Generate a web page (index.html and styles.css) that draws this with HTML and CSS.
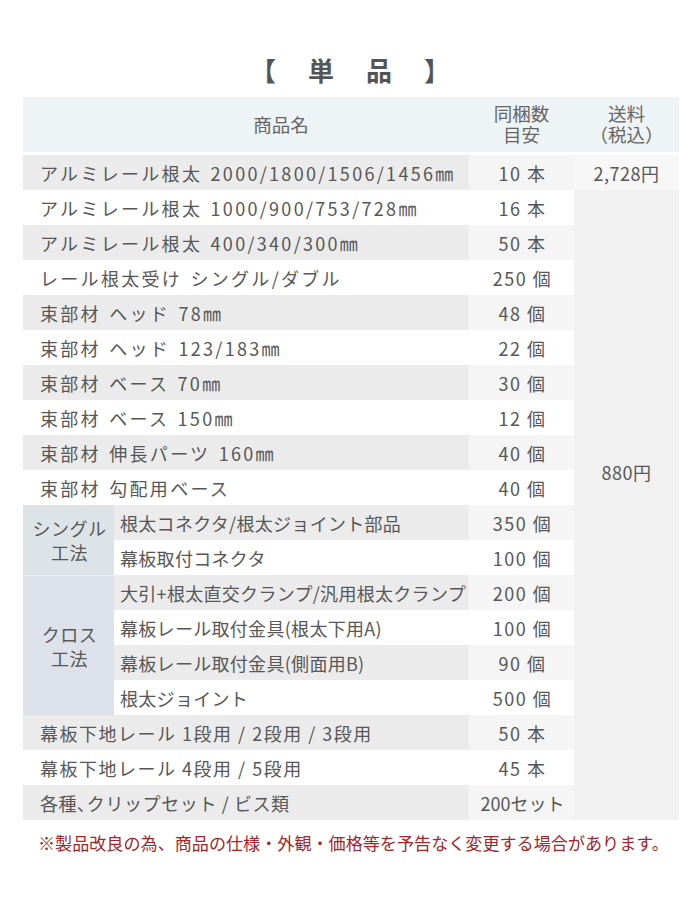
FILE: index.html
```html
<!DOCTYPE html>
<html lang="ja">
<head>
<meta charset="utf-8">
<title>単品</title>
<link rel="stylesheet" href="styles.css">
</head>
<body>
<h1 class="title">【単品】</h1>
<table class="price">
  <colgroup>
    <col class="c-label"><col class="c-sub"><col class="c-qty"><col class="c-ship">
  </colgroup>
  <thead>
    <tr>
      <th colspan="2" class="h-name">商品名</th>
      <th class="h-qty"><span class="hl">同梱数</span><span class="hl">目安</span></th>
      <th class="h-ship"><span class="hl">送料</span><span class="hl">（税込）</span></th>
    </tr>
  </thead>
  <tbody>
    <tr class="odd">
      <td colspan="2" class="name">アルミレール根太 2000/1800/1506/1456㎜</td>
      <td class="qty">10 本</td>
      <td class="ship first">2,728円</td>
    </tr>
    <tr>
      <td colspan="2" class="name">アルミレール根太 1000/900/753/728㎜</td>
      <td class="qty">16 本</td>
      <td class="ship rest" rowspan="18">880円</td>
    </tr>
    <tr class="odd"><td colspan="2" class="name">アルミレール根太 400/340/300㎜</td><td class="qty">50 本</td></tr>
    <tr><td colspan="2" class="name">レール根太受け シングル/ダブル</td><td class="qty">250 個</td></tr>
    <tr class="odd"><td colspan="2" class="name">束部材 ヘッド 78㎜</td><td class="qty">48 個</td></tr>
    <tr><td colspan="2" class="name">束部材 ヘッド 123/183㎜</td><td class="qty">22 個</td></tr>
    <tr class="odd"><td colspan="2" class="name">束部材 ベース 70㎜</td><td class="qty">30 個</td></tr>
    <tr><td colspan="2" class="name">束部材 ベース 150㎜</td><td class="qty">12 個</td></tr>
    <tr class="odd"><td colspan="2" class="name">束部材 伸長パーツ 160㎜</td><td class="qty">40 個</td></tr>
    <tr><td colspan="2" class="name">束部材 勾配用ベース</td><td class="qty">40 個</td></tr>
    <tr class="odd">
      <td rowspan="2" class="label single">シングル<br>工法</td>
      <td class="sub">根太コネクタ/根太ジョイント部品</td><td class="qty">350 個</td>
    </tr>
    <tr><td class="sub">幕板取付コネクタ</td><td class="qty">100 個</td></tr>
    <tr class="odd">
      <td rowspan="4" class="label cross">クロス<br>工法</td>
      <td class="sub">大引+根太直交クランプ/汎用根太クランプ</td><td class="qty">200 個</td>
    </tr>
    <tr><td class="sub">幕板レール取付金具(根太下用A)</td><td class="qty">100 個</td></tr>
    <tr class="odd"><td class="sub">幕板レール取付金具(側面用B)</td><td class="qty">90 個</td></tr>
    <tr><td class="sub">根太ジョイント</td><td class="qty">500 個</td></tr>
    <tr class="odd"><td colspan="2" class="name tight">幕板下地レール 1段用 / 2段用 / 3段用</td><td class="qty">50 本</td></tr>
    <tr><td colspan="2" class="name tight">幕板下地レール 4段用 / 5段用</td><td class="qty">45 本</td></tr>
    <tr class="odd"><td colspan="2" class="name tighter">各種､クリップセット / ビス類</td><td class="qty set">200セット</td></tr>
  </tbody>
</table>
<p class="note">※製品改良の為、商品の仕様・外観・価格等を予告なく変更する場合があります。</p>
</body>
</html>
```
FILE: styles.css
```css
html, body {
  margin: 0;
  padding: 0;
  background: #ffffff;
}
body {
  font-family: "Noto Sans CJK JP", "Noto Sans", sans-serif;
  color: #575757;
  width: 700px;
}
.title {
  margin: 0;
  padding: 52px 0 0 32px;
  height: 45px;
  line-height: 36px;
  font-size: 26px;
  font-weight: 700;
  letter-spacing: 32px;
  text-align: center;
  color: #555555;
}
.price {
  margin-left: 23px;
  width: 656px;
  border-collapse: separate;
  border-spacing: 0;
  table-layout: fixed;
}
.c-label { width: 91px; }
.c-sub { width: 355px; }
.c-qty { width: 105px; }
.c-ship { width: 105px; }

.price th {
  box-sizing: border-box;
  height: 58px;
  padding: 0 0 1px 0;
  background: #eef3f6;
  border-bottom: 3px solid #ffffff;
  font-weight: 400;
  font-size: 18.5px;
  line-height: 21px;
  color: #666666;
  text-align: center;
}
.price th .hl {
  display: block;
  height: 21px;
}
.price th.h-name {
  padding-left: 70px;
}
.price td {
  box-sizing: border-box;
  height: 35px;
  padding: 0;
  font-size: 18px;
  line-height: 24px;
  letter-spacing: 1.5px;
  white-space: nowrap;
  vertical-align: middle;
}
.price td.name {
  padding-left: 17px;
  letter-spacing: 2.3px;
  word-spacing: 2px;
}
.price td.name.tight {
  letter-spacing: 1.5px;
  word-spacing: 0;
}
.price td.name.tighter {
  letter-spacing: 0.6px;
  word-spacing: 0;
}
.price td.sub {
  padding-left: 6px;
  letter-spacing: 0.3px;
}
.price tr.odd td.name,
.price tr.odd td.sub {
  background: #ebebeb;
}
.price tr.odd td.qty {
  background: #f5f5f5;
}
.price td.qty {
  text-align: center;
  padding-left: 2px;
}
.price td.qty.set {
  letter-spacing: 0;
}
.price td.label {
  text-align: center;
  line-height: 24px;
  letter-spacing: 0.5px;
  padding-left: 2px;
}
.price td.label.single {
  background: #dce4e8;
}
.price td.label.cross {
  background: #dde2ea;
  border-top: 1px solid #e9eef1;
}
.price td.ship {
  text-align: center;
  letter-spacing: 0.5px;
}
.price td.ship.first {
  background: #f7f7f7;
}
.price td.ship.rest {
  background: #f1f1f1;
  padding-bottom: 66px;
}
.note {
  margin: 11px 0 0 0;
  padding-left: 38px;
  font-size: 17.1px;
  line-height: 24px;
  color: #a3262b;
  white-space: nowrap;
}
```
